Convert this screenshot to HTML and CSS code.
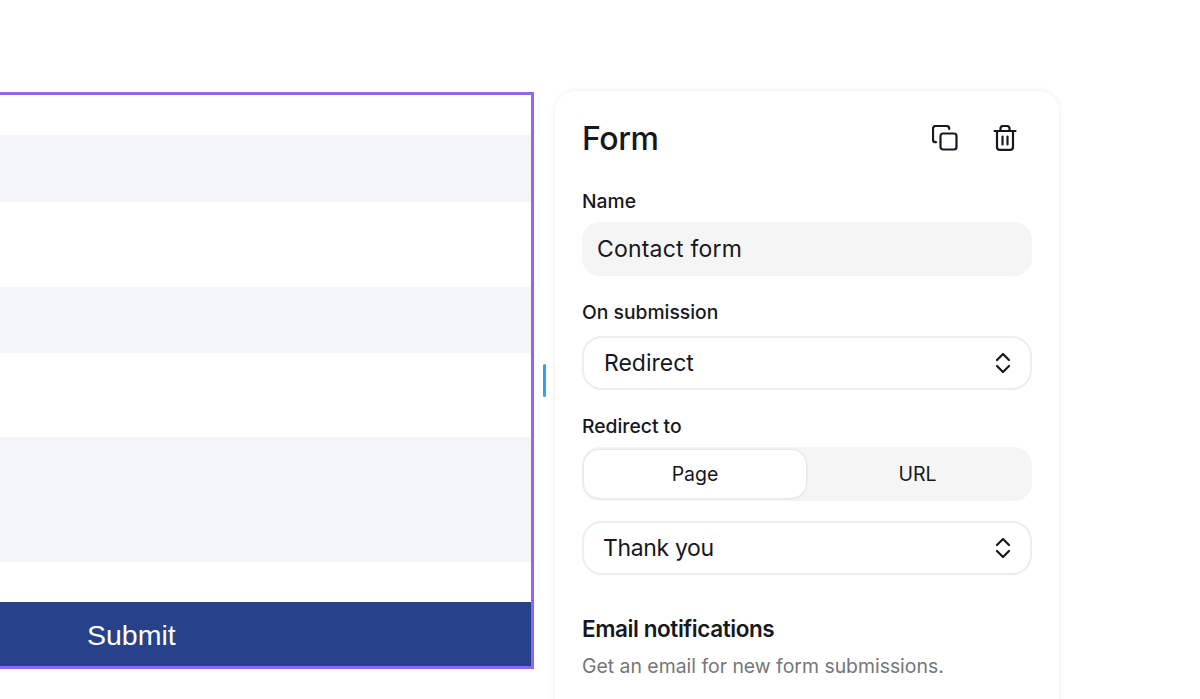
FILE: index.html
```html
<!DOCTYPE html>
<html lang="en">
<head>
<meta charset="utf-8">
<title>Form settings</title>
<link rel="stylesheet" href="styles.css">
</head>
<body>
<main class="stage">
  <section class="preview">
    <div class="gap gap-a"></div>
    <div class="field field-a"></div>
    <div class="gap gap-b"></div>
    <div class="field field-b"></div>
    <div class="gap gap-c"></div>
    <div class="field field-c"></div>
    <div class="gap gap-d"></div>
    <div class="submit"><span>Submit</span></div>
  </section>
  <div class="handle-col"><div class="handle"></div></div>
  <aside class="panel">
    <header class="panel-head">
      <h1>Form</h1>
      <div class="actions">
        <svg class="icon" viewBox="0 0 26 26" fill="none" stroke="#16181d" stroke-width="2.2" stroke-linecap="round" stroke-linejoin="round"><rect x="8.5" y="8.5" width="16" height="16" rx="2.5"/><path d="M4 17.2H3.6A2.6 2.6 0 0 1 1 14.6V3.6A2.6 2.6 0 0 1 3.6 1h11a2.6 2.6 0 0 1 2.6 2.6V4"/></svg>
        <svg class="icon" viewBox="0 0 26 26" fill="none" stroke="#16181d" stroke-width="2.2" stroke-linecap="round" stroke-linejoin="round"><path d="M2.5 6h21"/><path d="M8.5 6V3.6A2.6 2.6 0 0 1 11 1h4a2.6 2.6 0 0 1 2.5 2.6V6"/><path d="M5 6v16a2.8 2.8 0 0 0 2.8 2.8h10.4A2.8 2.8 0 0 0 21 22V6"/><path d="M10.5 11.5v8M15.5 11.5v8"/></svg>
      </div>
    </header>
    <label class="label label-name">Name</label>
    <div class="input">Contact form</div>
    <label class="label label-sub">On submission</label>
    <div class="select">Redirect
      <svg class="chev" viewBox="0 0 16 22" fill="none" stroke="#16181d" stroke-width="2.2" stroke-linecap="round" stroke-linejoin="round"><path d="M2 8l6-6 6 6M2 14l6 6 6-6"/></svg>
    </div>
    <label class="label label-to">Redirect to</label>
    <div class="segment">
      <div class="seg seg-on">Page</div>
      <div class="seg seg-off">URL</div>
    </div>
    <div class="select select-thanks">Thank you
      <svg class="chev" viewBox="0 0 16 22" fill="none" stroke="#16181d" stroke-width="2.2" stroke-linecap="round" stroke-linejoin="round"><path d="M2 8l6-6 6 6M2 14l6 6 6-6"/></svg>
    </div>
    <h2>Email notifications</h2>
    <p class="hint">Get an email for new form submissions.</p>
  </aside>
</main>
</body>
</html>
```
FILE: styles.css
```css
* { box-sizing: border-box; }
html, body { margin: 0; padding: 0; background: #fff; }
body { width: 1200px; height: 699px; overflow: hidden; font-family: Inter, "Noto Sans", sans-serif; color: #16181d; }
.stage { display: flex; align-items: flex-start; padding-top: 91px; height: 699px; overflow: hidden; }

.preview { flex: none; width: 534px; height: 577px; margin-top: 1px; border: 3px solid #9565f2; border-left: 0; display: flex; flex-direction: column; background: #fff; }
.gap { flex: none; }
.gap-a { height: 40px; }
.gap-b { height: 85px; }
.gap-c { height: 84px; }
.gap-d { height: 40px; }
.field { flex: none; background: #f4f5f7; }
.field-a { height: 67px; }
.field-b { height: 66px; }
.field-c { height: 125px; }
.submit { flex: none; height: 64px; background: #26428b; color: #fff; font: 28.5px/67px "Liberation Sans", sans-serif; padding-left: 87px; }

.handle-col { flex: none; width: 21px; align-self: stretch; position: relative; }
.handle { position: absolute; left: 9px; top: 273px; width: 3px; height: 33px; border-radius: 2px; background: #2e9ffa; }

.panel { flex: none; width: 504px; height: 700px; border-radius: 20px; background: #fff; padding: 0 27px; box-shadow: 0 0 6px rgba(20, 20, 40, 0.08); }
.panel-head { display: flex; align-items: center; justify-content: space-between; height: 94px; }
h1 { margin: 0; font-size: 32px; font-weight: 500; letter-spacing: -0.45px; }
.actions { display: flex; gap: 34px; padding-right: 14px; align-items: center; }
.icon { width: 26px; height: 26px; display: block; }

.label { display: block; font-size: 19.3px; font-weight: 500; line-height: 24px; }
.label-name { margin-top: 4px; }
.label-sub { margin-top: 24px; }
.label-to { margin-top: 24px; }

.input { margin-top: 9px; height: 54px; border-radius: 18px; background: #f5f5f6; padding-left: 15px; font-size: 23px; letter-spacing: 0.2px; line-height: 54px; }
.select { margin-top: 12px; height: 54px; border-radius: 20px; border: 2px solid #ededee; padding: 0 19px 0 20px; font-size: 23px; line-height: 50px; display: flex; align-items: center; justify-content: space-between; background: #fff; }
.select-thanks { margin-top: 20px; padding-left: 19px; letter-spacing: -0.35px; }
.chev { width: 16px; height: 22px; display: block; }

.segment { margin-top: 9px; height: 54px; border-radius: 18px; background: #f5f5f6; padding: 3px 3px 3px 2px; display: flex; }
.seg { display: flex; align-items: center; justify-content: center; font-size: 19.5px; font-weight: 400; }
.seg-on { flex: none; width: 222px; background: #fff; border-radius: 15px; box-shadow: 0 0 3px rgba(20, 20, 40, 0.16); }
.seg-off { flex: 1; }

h2 { margin: 39px 0 0; font-size: 22.5px; line-height: 30px; font-weight: 600; letter-spacing: -0.42px; }
.hint { margin: 9px 0 0; font-size: 19.4px; line-height: 26px; color: #75767a; }
```
